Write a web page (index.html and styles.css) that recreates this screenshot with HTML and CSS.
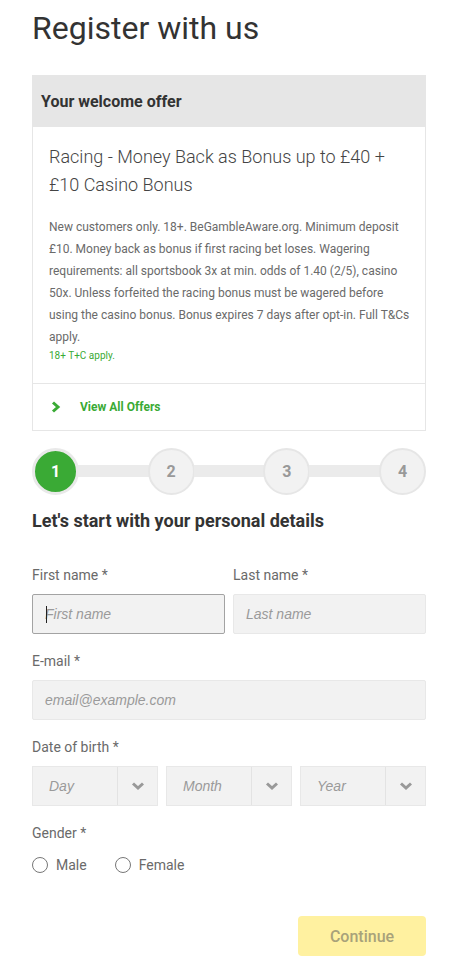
FILE: index.html
```html
<!DOCTYPE html>
<html lang="en">
<head>
<meta charset="utf-8">
<title>Register with us</title>
<link rel="stylesheet" href="styles.css">
</head>
<body>
<main class="page">
  <h1 class="title">Register with us</h1>

  <section class="offer">
    <div class="offer-head">Your welcome offer</div>
    <div class="offer-body">
      <h2 class="offer-title">Racing - Money Back as Bonus up to £40 + £10 Casino Bonus</h2>
      <p class="offer-terms">New customers only. 18+. BeGambleAware.org. Minimum deposit £10. Money back as bonus if first racing bet loses. Wagering requirements: all sportsbook 3x at min. odds of 1.40 (2/5), casino 50x. Unless forfeited the racing bonus must be wagered before using the casino bonus. Bonus expires 7 days after opt-in. Full T&amp;Cs apply.</p>
      <p class="offer-small">18+ T+C apply.</p>
    </div>
    <a class="offer-link" href="#">
      <svg class="chev" width="10" height="12" viewBox="0 0 10 12"><path d="M2 1.5 L7 6 L2 10.5" fill="none" stroke="#3aaa35" stroke-width="3"/></svg>
      <span>View All Offers</span>
    </a>
  </section>

  <div class="stepper">
    <div class="step active">1</div>
    <div class="bar"></div>
    <div class="step">2</div>
    <div class="bar"></div>
    <div class="step">3</div>
    <div class="bar"></div>
    <div class="step">4</div>
  </div>

  <h2 class="section-title">Let's start with your personal details</h2>

  <form class="form">
    <div class="row two">
      <div class="field">
        <label class="label">First name *</label>
        <div class="input focused"><span class="caret"></span><span class="ph">First name</span></div>
      </div>
      <div class="field">
        <label class="label">Last name *</label>
        <div class="input"><span class="ph">Last name</span></div>
      </div>
    </div>
    <div class="field">
      <label class="label">E-mail *</label>
      <div class="input"><span class="ph">email@example.com</span></div>
    </div>
    <div class="field">
      <label class="label">Date of birth *</label>
      <div class="row three">
        <div class="select"><span class="ph">Day</span><span class="arrow"><svg width="14" height="10" viewBox="0 0 14 10"><path d="M2 2.5 L7 7 L12 2.5" fill="none" stroke="#999" stroke-width="3"/></svg></span></div>
        <div class="select"><span class="ph">Month</span><span class="arrow"><svg width="14" height="10" viewBox="0 0 14 10"><path d="M2 2.5 L7 7 L12 2.5" fill="none" stroke="#999" stroke-width="3"/></svg></span></div>
        <div class="select"><span class="ph">Year</span><span class="arrow"><svg width="14" height="10" viewBox="0 0 14 10"><path d="M2 2.5 L7 7 L12 2.5" fill="none" stroke="#999" stroke-width="3"/></svg></span></div>
      </div>
    </div>
    <div class="field">
      <label class="label">Gender *</label>
      <div class="radios">
        <label class="radio"><span class="dot"></span>Male</label>
        <label class="radio"><span class="dot"></span>Female</label>
      </div>
    </div>
    <div class="actions">
      <button type="button" class="btn">Continue</button>
    </div>
  </form>
</main>
</body>
</html>
```
FILE: styles.css
```css
* { box-sizing: border-box; }
html, body { margin: 0; padding: 0; background: #fff; }
body { font-family: Roboto, "Noto Sans", Arial, sans-serif; color: #333; }
.page { padding: 9px 32px 12px 32px; width: 458px; }
.title { margin: 0; font-size: 32px; font-weight: 400; line-height: 38px; color: #333; }

.offer { margin-top: 28px; border: 1px solid #e6e6e6; border-top: none; }
.offer-head { background: #e6e6e6; height: 52px; display: flex; align-items: center; padding-left: 8px; font-size: 16px; font-weight: 700; color: #333; }
.offer-body { padding: 16px 12px 19px 16px; border-bottom: 1px solid #e6e6e6; }
.offer-title { margin: 0; font-size: 18px; font-weight: 300; line-height: 28px; color: #444; }
.offer-terms { margin: 17px 0 0 0; font-size: 12px; line-height: 22px; color: #6a6a6a; }
.offer-small { margin: 0; font-size: 10px; line-height: 16px; color: #3aaa35; }
.offer-link { display: flex; align-items: center; height: 46px; padding-left: 18px; text-decoration: none; color: #3aaa35; font-size: 12px; font-weight: 700; }
.offer-link .chev { margin-right: 19px; }

.stepper { display: flex; align-items: center; margin-top: 16px; height: 48px; }
.step { width: 47px; height: 47px; border-radius: 50%; flex: none; display: flex; align-items: center; justify-content: center; background: #f2f2f2; border: 2px solid #e6e6e6; color: #999; font-weight: 700; font-size: 16px; }
.step.active { background: #3aaa35; color: #fff; border: 3px solid #e9e9e9; }
.bar { flex: 1; height: 12px; background: #ebebeb; margin: 0 -1px; }

.section-title { margin: 14px 0 0 0; font-size: 18px; font-weight: 700; line-height: 24px; color: #333; }

.form { margin-top: 32px; display: flex; flex-direction: column; gap: 17px; }
.row { display: grid; gap: 8px; }
.row.two { grid-template-columns: 1fr 1fr; }
.row.three { grid-template-columns: 1fr 1fr 1fr; }
.field { display: flex; flex-direction: column; }
.label { font-size: 14px; line-height: 20px; color: #6a6a6a; margin-bottom: 9px; }
.input { height: 40px; background: #f2f2f2; border: 1px solid #e8e8e8; border-radius: 2px; display: flex; align-items: center; padding-left: 12px; position: relative; }
.input.focused { border-color: #a3a3a3; }
.caret { position: absolute; left: 13px; top: 11px; width: 1px; height: 17px; background: #222; }
.ph { font-family: "Liberation Sans", Arial, sans-serif; font-style: italic; font-size: 14px; color: #9a9a9a; }
.select { height: 40px; background: #f2f2f2; border: 1px solid #e8e8e8; display: flex; align-items: stretch; }
.select .ph { flex: 1; display: flex; align-items: center; padding-left: 16px; }
.arrow { width: 40px; border-left: 1px solid #e3e3e3; display: flex; align-items: center; justify-content: center; }
.radios { display: flex; gap: 28px; margin-top: 3px; }
.radio { display: flex; align-items: center; font-size: 14px; color: #6a6a6a; line-height: 20px; }
.dot { width: 16px; height: 16px; border: 1px solid #777; border-radius: 50%; margin-right: 8px; background: #fff; }
.actions { display: flex; justify-content: flex-end; margin-top: 24px; }
.btn { width: 128px; height: 40px; border: none; border-radius: 4px; background: #fff1a0; color: #a8a27a; font-family: Roboto, sans-serif; font-size: 16px; font-weight: 500; }
```
